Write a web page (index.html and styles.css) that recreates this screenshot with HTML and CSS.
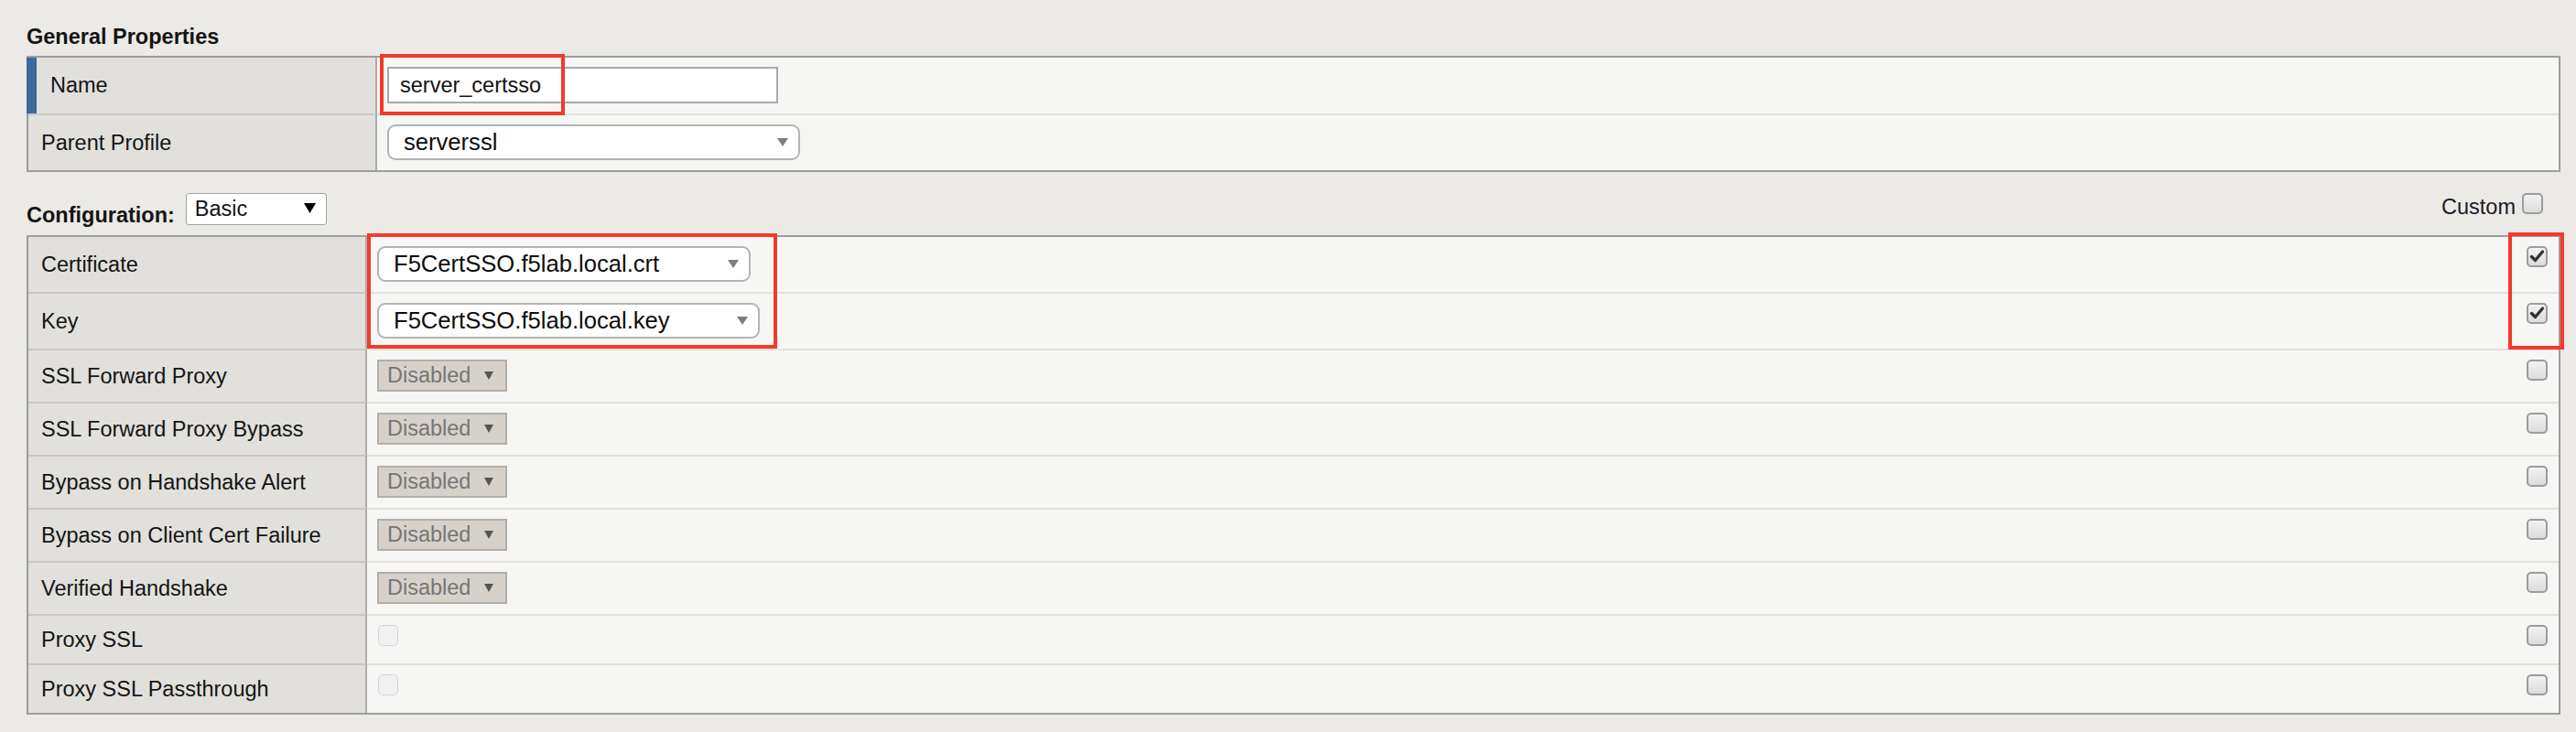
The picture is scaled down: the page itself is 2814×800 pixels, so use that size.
FILE: index.html
```html
<!DOCTYPE html>
<html lang="en">
<head>
<meta charset="utf-8">
<title>Server SSL Profile</title>
<link rel="stylesheet" href="styles.css">
</head>
<body>
<div class="page">
  <h2 class="section-title">General Properties</h2>
  <div class="ptable general">
    <div class="row">
      <div class="lbl active">Name</div>
      <div class="val"><div class="textbox">server_certsso</div></div>
    </div>
    <div class="row">
      <div class="lbl">Parent Profile</div>
      <div class="val">
        <div class="select rounded w-parent"><span>serverssl</span><svg class="caret" width="12" height="9" viewBox="0 0 12 9"><path d="M0 0H12L6 9Z" fill="#7d7d7d"/></svg></div>
      </div>
    </div>
    <div class="mark mark-name"></div>
  </div>

  <div class="config-bar">
    <div class="config-left">
      <span class="config-label">Configuration:</span>
      <div class="select basic"><span>Basic</span><svg class="caret" width="13" height="11" viewBox="0 0 13 11"><path d="M0 0H13L6.5 11Z" fill="#000"/></svg></div>
    </div>
    <div class="config-right">
      <span class="custom-label">Custom</span>
      <span class="cb"></span>
    </div>
  </div>

  <div class="ptable config">
    <div class="row">
      <div class="lbl">Certificate</div>
      <div class="val"><div class="select rounded w-cert"><span>F5CertSSO.f5lab.local.crt</span><svg class="caret" width="12" height="9" viewBox="0 0 12 9"><path d="M0 0H12L6 9Z" fill="#7d7d7d"/></svg></div></div>
      <div class="chk"><span class="cb"><svg width="17" height="17" viewBox="0 0 17 17"><path d="M2.5 8.5L6.5 12.5L14.5 3" fill="none" stroke="#333" stroke-width="3.4" stroke-linecap="round" stroke-linejoin="round"/></svg></span></div>
    </div>
    <div class="row">
      <div class="lbl">Key</div>
      <div class="val"><div class="select rounded w-key"><span>F5CertSSO.f5lab.local.key</span><svg class="caret" width="12" height="9" viewBox="0 0 12 9"><path d="M0 0H12L6 9Z" fill="#7d7d7d"/></svg></div></div>
      <div class="chk"><span class="cb"><svg width="17" height="17" viewBox="0 0 17 17"><path d="M2.5 8.5L6.5 12.5L14.5 3" fill="none" stroke="#333" stroke-width="3.4" stroke-linecap="round" stroke-linejoin="round"/></svg></span></div>
    </div>
    <div class="row">
      <div class="lbl">SSL Forward Proxy</div>
      <div class="val"><div class="select disabled"><span>Disabled</span><svg class="caret" width="10" height="9" viewBox="0 0 10 9"><path d="M0 0H10L5 9Z" fill="#555"/></svg></div></div>
      <div class="chk"><span class="cb"></span></div>
    </div>
    <div class="row">
      <div class="lbl">SSL Forward Proxy Bypass</div>
      <div class="val"><div class="select disabled"><span>Disabled</span><svg class="caret" width="10" height="9" viewBox="0 0 10 9"><path d="M0 0H10L5 9Z" fill="#555"/></svg></div></div>
      <div class="chk"><span class="cb"></span></div>
    </div>
    <div class="row">
      <div class="lbl">Bypass on Handshake Alert</div>
      <div class="val"><div class="select disabled"><span>Disabled</span><svg class="caret" width="10" height="9" viewBox="0 0 10 9"><path d="M0 0H10L5 9Z" fill="#555"/></svg></div></div>
      <div class="chk"><span class="cb"></span></div>
    </div>
    <div class="row">
      <div class="lbl">Bypass on Client Cert Failure</div>
      <div class="val"><div class="select disabled"><span>Disabled</span><svg class="caret" width="10" height="9" viewBox="0 0 10 9"><path d="M0 0H10L5 9Z" fill="#555"/></svg></div></div>
      <div class="chk"><span class="cb"></span></div>
    </div>
    <div class="row">
      <div class="lbl">Verified Handshake</div>
      <div class="val"><div class="select disabled"><span>Disabled</span><svg class="caret" width="10" height="9" viewBox="0 0 10 9"><path d="M0 0H10L5 9Z" fill="#555"/></svg></div></div>
      <div class="chk"><span class="cb"></span></div>
    </div>
    <div class="row cbrow">
      <div class="lbl">Proxy SSL</div>
      <div class="val"><span class="cb off"></span></div>
      <div class="chk"><span class="cb"></span></div>
    </div>
    <div class="row cbrow">
      <div class="lbl">Proxy SSL Passthrough</div>
      <div class="val"><span class="cb off"></span></div>
      <div class="chk"><span class="cb"></span></div>
    </div>
    <div class="mark mark-certkey"></div>
    <div class="mark mark-custom"></div>
  </div>
</div>
</body>
</html>
```

FILE: styles.css
```css
* { box-sizing: border-box; }

html, body {
  margin: 0;
  background: #ebeae6;
}

body {
  font-family: "Liberation Sans", Arial, sans-serif;
  color: #141414;
  overflow: hidden;
}

.page {
  padding: 27px 17px 0 29px;
}

.section-title {
  margin: 0 0 7px;
  font-size: 23.5px;
  line-height: 27px;
  font-weight: bold;
}

.ptable {
  position: relative;
  border: 2px solid #9d9d9d;
  background: #f6f6f4;
}

.row {
  display: grid;
}

.general .row { grid-template-columns: 381px 1fr; }
.config .row { grid-template-columns: 370px 1fr auto; }

.row + .row > * { border-top: 2px solid #e2e1de; }
.row + .row > .lbl { border-top-color: #c9c8c4; }

.lbl {
  display: flex;
  align-items: center;
  padding: 0 14px;
  background: #e1e0dc;
  border-right: 2px solid #acaba7;
  font-size: 23.5px;
  line-height: 27px;
}

.lbl.active {
  margin-left: -2px;
  border-left: 11px solid #3b6a9b;
  padding-left: 15px;
}

.val {
  display: flex;
  align-items: flex-start;
  padding: 10px 11px 11px;
}

.cbrow .val { padding-bottom: 19px; }

.chk {
  padding: 10px 12px 0 0;
}

.textbox {
  width: 427px;
  height: 40px;
  padding: 0 12px;
  border: 2px solid #a9a9a9;
  background: #fff;
  font-size: 23.5px;
  line-height: 36px;
  color: #111;
}

.select {
  display: flex;
  align-items: center;
  justify-content: space-between;
  background: #fff;
  white-space: nowrap;
}

.select.rounded {
  height: 39px;
  padding: 0 11px 0 16px;
  border: 2px solid #b4b4b4;
  border-radius: 9px;
  font-size: 25.6px;
  color: #0d0d0d;
}

.w-parent { width: 451px; }
.w-cert { width: 408px; }
.w-key { width: 418px; }

.select.basic {
  width: 154px;
  height: 35px;
  padding: 0 11px 0 9px;
  border: 1.5px solid #a4a4a4;
  border-radius: 3px;
  font-size: 23.5px;
  align-items: flex-start;
  padding-top: 3px;
}

.select.basic .caret { margin-top: 7px; }

.select.disabled {
  width: 142px;
  height: 35px;
  padding: 0 13px 0 9px;
  border: 2px solid #b3afa8;
  background: #d6d2cb;
  font-size: 23.5px;
  color: #767676;
}

.config-bar {
  display: flex;
  justify-content: space-between;
  margin: 23px 0 11px;
  height: 35px;
}

.config-left {
  display: flex;
  align-items: flex-end;
  gap: 12px;
}

.config-label {
  font-size: 23.5px;
  line-height: 22px;
  font-weight: bold;
}

.config-right {
  display: flex;
  align-items: flex-start;
  gap: 7px;
  margin-right: 19px;
}

.custom-label {
  padding-top: 2px;
  font-size: 23.5px;
  line-height: 27px;
  color: #1a1a2a;
}

.cb {
  display: flex;
  align-items: center;
  justify-content: center;
  width: 23px;
  height: 23px;
  border: 2px solid #9c9c9c;
  border-radius: 5px;
  background: linear-gradient(#f2f2f2, #dcdcdc);
}

.cb.off {
  width: 22px;
  margin-left: 1px;
  border: 1.5px solid #d4d4d4;
  background: #f1f1f1;
}

.mark {
  position: absolute;
  border: 4px solid #f33a2b;
  pointer-events: none;
}

.mark-name { left: 384px; top: -4px; width: 202px; height: 67px; }
.mark-certkey { left: 370px; top: -4px; width: 448px; height: 126px; }
.mark-custom { left: 2709px; top: -5px; width: 61px; height: 128px; }
```
